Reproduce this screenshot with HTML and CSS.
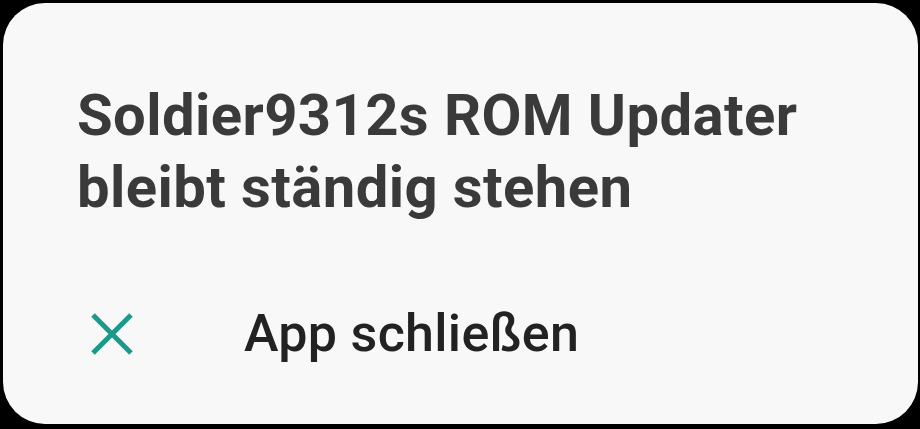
FILE: index.html
```html
<!DOCTYPE html>
<html lang="de">
<head>
<meta charset="utf-8">
<link rel="stylesheet" href="styles.css">
</head>
<body>
<div class="dialog">
  <h1 class="title">Soldier9312s ROM Updater<br>bleibt ständig stehen</h1>
  <div class="action">
    <svg class="icon" width="44" height="42" viewBox="0 0 44 42" aria-hidden="true">
      <path d="M3 2 L41 40 M41 2 L3 40" stroke="#1b9a8a" stroke-width="5" fill="none"/>
    </svg>
    <span class="label">App schließen</span>
  </div>
</div>
</body>
</html>
```
FILE: styles.css
```css
html, body {
  margin: 0;
  padding: 0;
  background: #000;
}
body {
  width: 920px;
  height: 429px;
  overflow: hidden;
}
.dialog {
  box-sizing: border-box;
  margin: 3px 0 0 3px;
  width: 915px;
  height: 421px;
  background: #f8f8f8;
  border-radius: 42px;
  padding: 76px 0 0 74px;
  font-family: Roboto, "Noto Sans", sans-serif;
}
.title {
  margin: 0;
  font-size: 58px;
  line-height: 72px;
  font-weight: 700;
  letter-spacing: 0.4px;
  color: #3a3a3a;
}
.action {
  display: flex;
  align-items: center;
  margin-top: 81px;
  padding-left: 13px;
  height: 60px;
}
.icon {
  flex: none;
  margin-right: 110px;
}
.label {
  font-size: 52px;
  line-height: 60px;
  font-weight: 500;
  letter-spacing: 0.3px;
  color: #222;
}
```
